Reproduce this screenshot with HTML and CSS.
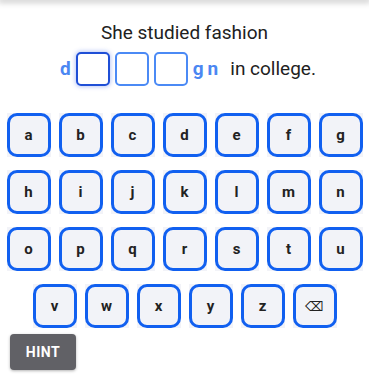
FILE: index.html
```html
<!DOCTYPE html>
<html>
<head>
<meta charset="utf-8">
<link rel="stylesheet" href="styles.css">
</head>
<body>
<div class="appbar"></div>
<main class="page">
  <p class="prompt">She studied fashion</p>
  <div class="answer">
    <span class="given">d</span>
    <span class="slot slot-active"></span>
    <span class="slot"></span>
    <span class="slot"></span>
    <span class="given">g</span>
    <span class="given">n</span>
    <span class="rest">in college.</span>
  </div>
  <div class="keyboard">
    <div class="krow">
      <div class="key"><span>a</span></div>
      <div class="key"><span>b</span></div>
      <div class="key"><span>c</span></div>
      <div class="key"><span>d</span></div>
      <div class="key"><span>e</span></div>
      <div class="key"><span>f</span></div>
      <div class="key"><span>g</span></div>
    </div>
    <div class="krow">
      <div class="key"><span>h</span></div>
      <div class="key"><span>i</span></div>
      <div class="key"><span>j</span></div>
      <div class="key"><span>k</span></div>
      <div class="key"><span>l</span></div>
      <div class="key"><span>m</span></div>
      <div class="key"><span>n</span></div>
    </div>
    <div class="krow">
      <div class="key"><span>o</span></div>
      <div class="key"><span>p</span></div>
      <div class="key"><span>q</span></div>
      <div class="key"><span>r</span></div>
      <div class="key"><span>s</span></div>
      <div class="key"><span>t</span></div>
      <div class="key"><span>u</span></div>
    </div>
    <div class="krow">
      <div class="key"><span>v</span></div>
      <div class="key"><span>w</span></div>
      <div class="key"><span>x</span></div>
      <div class="key"><span>y</span></div>
      <div class="key"><span>z</span></div>
      <div class="key"><span class="bksp">⌫</span></div>
    </div>
  </div>
  <button class="hint">HINT</button>
</main>
</body>
</html>
```
FILE: styles.css
```css
html, body {
  margin: 0;
  padding: 0;
  background: #ffffff;
}
body {
  font-family: Roboto, "Liberation Sans", sans-serif;
  color: #212121;
  width: 369px;
  height: 381px;
  overflow: hidden;
}
.appbar {
  height: 0;
  box-shadow: 0 0 6px 2px rgba(0, 0, 0, 0.28);
}
.page {
  display: flex;
  flex-direction: column;
}
.prompt {
  margin: 21px 0 0;
  font-size: 19px;
  line-height: 24px;
  text-align: center;
}
.answer {
  display: flex;
  justify-content: center;
  align-items: center;
  gap: 5px;
  margin-top: 6px;
  height: 35px;
  padding-left: 7px;
}
.given {
  color: #4b87f2;
  font-weight: 700;
  font-size: 19px;
}
.answer .given + .given {
  margin-left: -1px;
}
.slot {
  width: 30px;
  height: 30px;
  border: 2px solid #4b8af5;
  border-radius: 5px;
  background: #fff;
}
.slot-active {
  border-color: #1f4fd6;
  box-shadow: 0 0 4px 1px rgba(60, 100, 230, 0.35);
}
.rest {
  font-size: 19px;
  margin-left: 7px;
}
.keyboard {
  display: flex;
  flex-direction: column;
  align-items: center;
  gap: 13px;
  margin-top: 27px;
}
.krow {
  display: flex;
  gap: 8px;
}
.key {
  width: 44px;
  height: 44px;
  background: #f2f3f8;
}
.key span {
  box-sizing: border-box;
  display: flex;
  align-items: center;
  justify-content: center;
  width: 44px;
  height: 44px;
  border: 3px solid #1160f0;
  border-radius: 10px;
  font-size: 15px;
  font-weight: 700;
  color: #222;
}
.key .bksp {
  font-family: "DejaVu Sans", sans-serif;
  font-weight: 400;
  font-size: 13px;
}
.hint {
  align-self: flex-start;
  margin: 6px 0 0 10px;
  width: 66px;
  height: 36px;
  border: none;
  border-radius: 4px;
  background: #616166;
  color: #fff;
  font-family: Roboto, "Liberation Sans", sans-serif;
  font-weight: 700;
  font-size: 14px;
  letter-spacing: 0.5px;
  box-shadow: 0 1px 3px rgba(0, 0, 0, 0.3);
}
```
